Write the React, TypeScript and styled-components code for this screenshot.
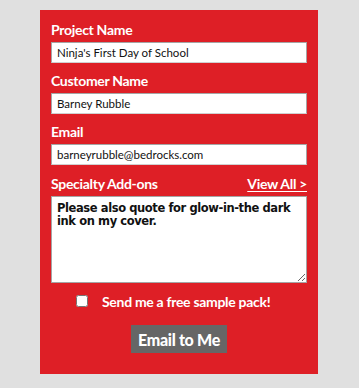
import React from 'react';
import styled, { createGlobalStyle } from 'styled-components';

const Global = createGlobalStyle`
  html, body {
    margin: 0;
    padding: 0;
    background: #e0e0e0;
  }
  body {
    font-family: Lato, "Liberation Sans", sans-serif;
  }
`;

const Panel = styled.form`
  box-sizing: border-box;
  margin: 10px 0 0 40px;
  width: 278px;
  height: 364px;
  padding: 10px 11px 21px;
  background: #de1f26;
  display: flex;
  flex-direction: column;
  & > * {
    flex-shrink: 0;
  }
`;

const Field = styled.div<{ gap?: number }>`
  display: flex;
  flex-direction: column;
  margin-bottom: ${(p) => p.gap ?? 8}px;
`;

const LabelRow = styled.div`
  display: flex;
  justify-content: space-between;
  align-items: center;
  height: 18px;
  margin-bottom: 4px;
`;

const Label = styled.label`
  color: #fff;
  font-weight: 700;
  font-size: 14px;
  letter-spacing: -0.3px;
`;

const ViewAll = styled.a`
  color: #fff;
  font-weight: 700;
  font-size: 14px;
  letter-spacing: -0.3px;
  text-decoration: underline;
  text-underline-offset: 2px;
`;

const Input = styled.input`
  box-sizing: border-box;
  width: 256px;
  height: 21px;
  margin: 0;
  padding: 0 5px;
  border: 1px solid #a5a5a5;
  border-bottom-color: #d0d0d0;
  background: #fff;
  color: #111;
  font-family: Lato, "Liberation Sans", sans-serif;
  font-size: 11.5px;
  outline: none;
`;

const Notes = styled.textarea`
  box-sizing: border-box;
  width: 256px;
  height: 87px;
  margin: 0;
  padding: 5px 5px;
  border: 1px solid #a5a5a5;
  background: #fff;
  color: #111;
  font-family: "DejaVu Sans", Verdana, sans-serif;
  font-weight: 700;
  font-size: 11.5px;
  letter-spacing: -0.4px;
  line-height: 13px;
  resize: both;
  outline: none;
`;

const CheckRow = styled.div`
  display: flex;
  align-items: center;
  margin: 8px 0 0 25px;
  height: 20px;
  gap: 14px;
`;

const Check = styled.input`
  margin: 0;
  width: 12px;
  height: 12px;
`;

const CheckText = styled.span`
  color: #fff;
  font-weight: 700;
  font-size: 14px;
  letter-spacing: -0.3px;
`;

const Submit = styled.button`
  align-self: center;
  margin-top: 14px;
  width: 96px;
  height: 28px;
  padding: 0;
  border: none;
  background: #666;
  color: #fff;
  font-family: Lato, "Liberation Sans", sans-serif;
  font-weight: 900;
  font-size: 16px;
  letter-spacing: -0.3px;
`;

export default function App() {
  return (
    <>
      <Global />
      <Panel onSubmit={(e) => e.preventDefault()}>
        <Field>
          <LabelRow>
            <Label>Project Name</Label>
          </LabelRow>
          <Input defaultValue="Ninja's First Day of School" />
        </Field>
        <Field>
          <LabelRow>
            <Label>Customer Name</Label>
          </LabelRow>
          <Input defaultValue="Barney Rubble" />
        </Field>
        <Field gap={9}>
          <LabelRow>
            <Label>Email</Label>
          </LabelRow>
          <Input defaultValue="barneyrubble@bedrocks.com" />
        </Field>
        <Field gap={0}>
          <LabelRow>
            <Label>Specialty Add-ons</Label>
            <ViewAll href="#">View All &gt;</ViewAll>
          </LabelRow>
          <Notes defaultValue="Please also quote for glow-in-the dark ink on my cover." />
        </Field>
        <CheckRow>
          <Check type="checkbox" />
          <CheckText>Send me a free sample pack!</CheckText>
        </CheckRow>
        <Submit type="submit">Email to Me</Submit>
      </Panel>
    </>
  );
}
